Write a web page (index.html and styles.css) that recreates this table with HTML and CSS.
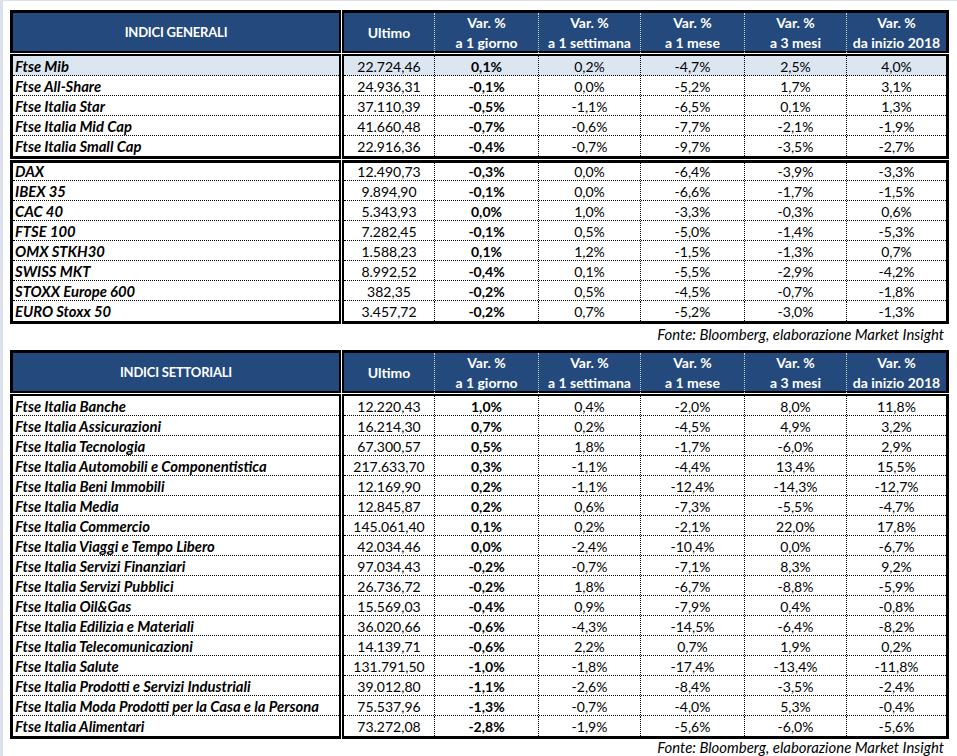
FILE: index.html
```html
<!DOCTYPE html>
<html lang="it">
<head>
<meta charset="utf-8">
<title>Indici</title>
<link rel="stylesheet" href="styles.css">
</head>
<body>
<div class="sheet">

  <section class="tbl">
    <div class="band head">
      <div class="blk name-blk"><div class="htitle">INDICI GENERALI</div></div>
      <div class="blk data-blk">
        <div class="drow hrow">
          <div class="hc">Ultimo</div>
          <div class="hc">Var. %<br>a 1 giorno</div>
          <div class="hc">Var. %<br>a 1 settimana</div>
          <div class="hc">Var. %<br>a 1 mese</div>
          <div class="hc">Var. %<br>a 3 mesi</div>
          <div class="hc">Var. %<br>da inizio 2018</div>
        </div>
      </div>
    </div>

    <div class="band grp">
      <div class="blk name-blk">
        <div class="nrow hl">Ftse Mib</div>
        <div class="nrow">Ftse All-Share</div>
        <div class="nrow">Ftse Italia Star</div>
        <div class="nrow">Ftse Italia Mid Cap</div>
        <div class="nrow">Ftse Italia Small Cap</div>
      </div>
      <div class="blk data-blk">
        <div class="drow hl"><span>22.724,46</span><span>0,1%</span><span>0,2%</span><span>-4,7%</span><span>2,5%</span><span>4,0%</span></div>
        <div class="drow"><span>24.936,31</span><span>-0,1%</span><span>0,0%</span><span>-5,2%</span><span>1,7%</span><span>3,1%</span></div>
        <div class="drow"><span>37.110,39</span><span>-0,5%</span><span>-1,1%</span><span>-6,5%</span><span>0,1%</span><span>1,3%</span></div>
        <div class="drow"><span>41.660,48</span><span>-0,7%</span><span>-0,6%</span><span>-7,7%</span><span>-2,1%</span><span>-1,9%</span></div>
        <div class="drow"><span>22.916,36</span><span>-0,4%</span><span>-0,7%</span><span>-9,7%</span><span>-3,5%</span><span>-2,7%</span></div>
      </div>
    </div>

    <div class="band grp g2">
      <div class="blk name-blk">
        <div class="nrow">DAX</div>
        <div class="nrow">IBEX 35</div>
        <div class="nrow">CAC 40</div>
        <div class="nrow">FTSE 100</div>
        <div class="nrow">OMX STKH30</div>
        <div class="nrow">SWISS MKT</div>
        <div class="nrow">STOXX Europe 600</div>
        <div class="nrow">EURO Stoxx 50</div>
      </div>
      <div class="blk data-blk">
        <div class="drow"><span>12.490,73</span><span>-0,3%</span><span>0,0%</span><span>-6,4%</span><span>-3,9%</span><span>-3,3%</span></div>
        <div class="drow"><span>9.894,90</span><span>-0,1%</span><span>0,0%</span><span>-6,6%</span><span>-1,7%</span><span>-1,5%</span></div>
        <div class="drow"><span>5.343,93</span><span>0,0%</span><span>1,0%</span><span>-3,3%</span><span>-0,3%</span><span>0,6%</span></div>
        <div class="drow"><span>7.282,45</span><span>-0,1%</span><span>0,5%</span><span>-5,0%</span><span>-1,4%</span><span>-5,3%</span></div>
        <div class="drow"><span>1.588,23</span><span>0,1%</span><span>1,2%</span><span>-1,5%</span><span>-1,3%</span><span>0,7%</span></div>
        <div class="drow"><span>8.992,52</span><span>-0,4%</span><span>0,1%</span><span>-5,5%</span><span>-2,9%</span><span>-4,2%</span></div>
        <div class="drow"><span>382,35</span><span>-0,2%</span><span>0,5%</span><span>-4,5%</span><span>-0,7%</span><span>-1,8%</span></div>
        <div class="drow"><span>3.457,72</span><span>-0,2%</span><span>0,7%</span><span>-5,2%</span><span>-3,0%</span><span>-1,3%</span></div>
      </div>
    </div>
  </section>
  <p class="source">Fonte: Bloomberg, elaborazione Market Insight</p>

  <section class="tbl">
    <div class="band head">
      <div class="blk name-blk"><div class="htitle">INDICI SETTORIALI</div></div>
      <div class="blk data-blk">
        <div class="drow hrow">
          <div class="hc">Ultimo</div>
          <div class="hc">Var. %<br>a 1 giorno</div>
          <div class="hc">Var. %<br>a 1 settimana</div>
          <div class="hc">Var. %<br>a 1 mese</div>
          <div class="hc">Var. %<br>a 3 mesi</div>
          <div class="hc">Var. %<br>da inizio 2018</div>
        </div>
      </div>
    </div>

    <div class="band grp">
      <div class="blk name-blk">
        <div class="nrow">Ftse Italia Banche</div>
        <div class="nrow">Ftse Italia Assicurazioni</div>
        <div class="nrow">Ftse Italia Tecnologia</div>
        <div class="nrow">Ftse Italia Automobili e Componentistica</div>
        <div class="nrow">Ftse Italia Beni Immobili</div>
        <div class="nrow">Ftse Italia Media</div>
        <div class="nrow">Ftse Italia Commercio</div>
        <div class="nrow">Ftse Italia Viaggi e Tempo Libero</div>
        <div class="nrow">Ftse Italia Servizi Finanziari</div>
        <div class="nrow">Ftse Italia Servizi Pubblici</div>
        <div class="nrow">Ftse Italia Oil&amp;Gas</div>
        <div class="nrow">Ftse Italia Edilizia e Materiali</div>
        <div class="nrow">Ftse Italia Telecomunicazioni</div>
        <div class="nrow">Ftse Italia Salute</div>
        <div class="nrow">Ftse Italia Prodotti e Servizi Industriali</div>
        <div class="nrow">Ftse Italia Moda Prodotti per la Casa e la Persona</div>
        <div class="nrow">Ftse Italia Alimentari</div>
      </div>
      <div class="blk data-blk">
        <div class="drow"><span>12.220,43</span><span>1,0%</span><span>0,4%</span><span>-2,0%</span><span>8,0%</span><span>11,8%</span></div>
        <div class="drow"><span>16.214,30</span><span>0,7%</span><span>0,2%</span><span>-4,5%</span><span>4,9%</span><span>3,2%</span></div>
        <div class="drow"><span>67.300,57</span><span>0,5%</span><span>1,8%</span><span>-1,7%</span><span>-6,0%</span><span>2,9%</span></div>
        <div class="drow"><span>217.633,70</span><span>0,3%</span><span>-1,1%</span><span>-4,4%</span><span>13,4%</span><span>15,5%</span></div>
        <div class="drow"><span>12.169,90</span><span>0,2%</span><span>-1,1%</span><span>-12,4%</span><span>-14,3%</span><span>-12,7%</span></div>
        <div class="drow"><span>12.845,87</span><span>0,2%</span><span>0,6%</span><span>-7,3%</span><span>-5,5%</span><span>-4,7%</span></div>
        <div class="drow"><span>145.061,40</span><span>0,1%</span><span>0,2%</span><span>-2,1%</span><span>22,0%</span><span>17,8%</span></div>
        <div class="drow"><span>42.034,46</span><span>0,0%</span><span>-2,4%</span><span>-10,4%</span><span>0,0%</span><span>-6,7%</span></div>
        <div class="drow"><span>97.034,43</span><span>-0,2%</span><span>-0,7%</span><span>-7,1%</span><span>8,3%</span><span>9,2%</span></div>
        <div class="drow"><span>26.736,72</span><span>-0,2%</span><span>1,8%</span><span>-6,7%</span><span>-8,8%</span><span>-5,9%</span></div>
        <div class="drow"><span>15.569,03</span><span>-0,4%</span><span>0,9%</span><span>-7,9%</span><span>0,4%</span><span>-0,8%</span></div>
        <div class="drow"><span>36.020,66</span><span>-0,6%</span><span>-4,3%</span><span>-14,5%</span><span>-6,4%</span><span>-8,2%</span></div>
        <div class="drow"><span>14.139,71</span><span>-0,6%</span><span>2,2%</span><span>0,7%</span><span>1,9%</span><span>0,2%</span></div>
        <div class="drow"><span>131.791,50</span><span>-1,0%</span><span>-1,8%</span><span>-17,4%</span><span>-13,4%</span><span>-11,8%</span></div>
        <div class="drow"><span>39.012,80</span><span>-1,1%</span><span>-2,6%</span><span>-8,4%</span><span>-3,5%</span><span>-2,4%</span></div>
        <div class="drow"><span>75.537,96</span><span>-1,3%</span><span>-0,7%</span><span>-4,0%</span><span>5,3%</span><span>-0,4%</span></div>
        <div class="drow"><span>73.272,08</span><span>-2,8%</span><span>-1,9%</span><span>-5,6%</span><span>-6,0%</span><span>-5,6%</span></div>
      </div>
    </div>
  </section>
  <p class="source last">Fonte: Bloomberg, elaborazione Market Insight</p>

</div>
</body>
</html>
```

FILE: styles.css
```css
html, body {
  margin: 0;
  padding: 0;
}

body {
  background: #ffffff;
  border-top: 1px solid #dbe2ec;
  border-left: 3px solid #dbe2ec;
  font-family: Lato, "Liberation Sans", sans-serif;
  font-size: 14px;
  color: #000;
  min-height: 755px;
  box-sizing: border-box;
}

.sheet {
  padding: 9px 0 0 7px;
  width: 939px;
}

.band {
  display: grid;
  grid-template-columns: 331px 607px;
  column-gap: 1px;
}

.band + .band {
  margin-top: 1px;
}

.blk {
  border: 0 solid #000;
  box-sizing: border-box;
}

.name-blk {
  border-left-width: 3px;
  border-right-width: 2px;
}

.data-blk {
  border-left-width: 2px;
  border-right-width: 3px;
}

/* header band */
.head .blk {
  background: #244a7d;
  border-top-width: 3px;
  border-bottom-width: 2px;
  height: 43px;
  color: #fff;
  font-weight: 700;
}

.htitle {
  height: 100%;
  display: flex;
  align-items: center;
  justify-content: center;
  font-size: 13px;
  letter-spacing: -0.2px;
}

.drow {
  display: grid;
  grid-template-columns: 90px 104px 102px 104px 102px 100px;
}

.hrow {
  height: 100%;
}

.hc {
  display: flex;
  align-items: center;
  justify-content: center;
  text-align: center;
  line-height: 20px;
}

.hc + .hc {
  border-left: 1px dotted rgba(255, 255, 255, 0.75);
}

/* body groups */
.grp .blk {
  border-top-width: 2px;
  border-bottom-width: 3px;
}

.g2 .blk {
  border-top-width: 3px;
}

.g2 .nrow:first-child,
.g2 .drow:first-child {
  height: 18px;
  padding-top: 0;
}

.nrow,
.grp .drow {
  height: 20px;
  box-sizing: border-box;
  border-bottom: 1px dotted #000;
  line-height: 17px;
  padding-top: 2px;
  white-space: nowrap;
}

.nrow:last-child,
.grp .drow:last-child {
  border-bottom: 0;
}

.nrow {
  font-weight: 700;
  font-style: italic;
  font-size: 14.8px;
  padding-left: 2px;
}

.grp .drow span {
  text-align: center;
}

.grp .drow span + span {
  border-left: 1px dotted #000;
  margin-top: -2px;
  padding-top: 2px;
}

.grp .drow span:nth-child(2) {
  font-weight: 700;
}

.hl {
  background: #dce6f1;
}

.source {
  margin: 0;
  height: 26px;
  box-sizing: border-box;
  padding: 1px 5px 0 0;
  line-height: 18px;
  text-align: right;
  font-style: italic;
  font-size: 14.9px;
}

.source.last {
  height: 18px;
  padding-top: 0;
  line-height: 16px;
}
```
